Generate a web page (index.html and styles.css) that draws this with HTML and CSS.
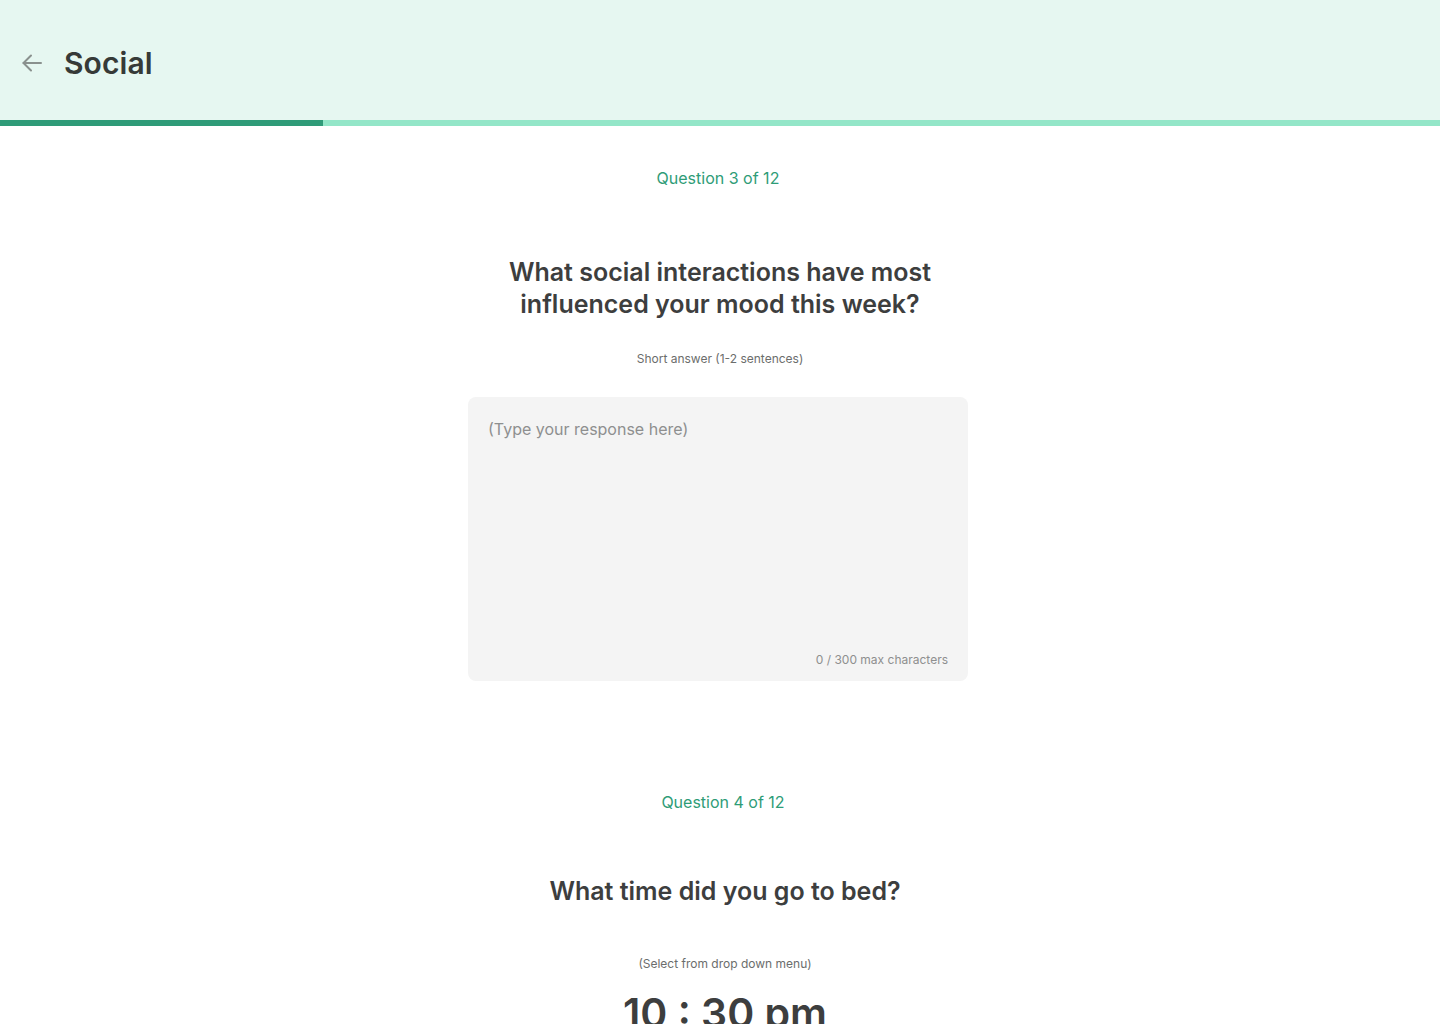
FILE: index.html
```html
<!DOCTYPE html>
<html lang="en">
<head>
<meta charset="utf-8">
<title>Social</title>
<link rel="stylesheet" href="styles.css">
</head>
<body>
<header class="top">
  <div class="top-row">
    <button class="back" aria-label="Back">
      <svg width="24" height="24" viewBox="0 0 24 24" fill="none" stroke="#8a918e" stroke-width="2" stroke-linecap="round" stroke-linejoin="round"><path d="M21 12H3.5"/><path d="M11 4.5 3.5 12l7.5 7.5"/></svg>
    </button>
    <h1 class="title">Social</h1>
  </div>
</header>
<div class="progress"><div class="progress-fill" style="width:323px"></div></div>

<main class="content">
  <section class="question q3">
    <p class="q-count">Question 3 of 12</p>
    <h2 class="q-text">What social interactions have most<br>influenced your mood this week?</h2>
    <p class="q-hint">Short answer (1-2 sentences)</p>
    <div class="answer">
      <div class="placeholder">(Type your response here)</div>
      <div class="counter">0 / 300 max characters</div>
    </div>
  </section>

  <section class="question q4">
    <p class="q-count">Question 4 of 12</p>
    <h2 class="q-text">What time did you go to bed?</h2>
    <p class="q-hint hint-select">(Select from drop down menu)</p>
    <div class="time">10 : 30 pm</div>
  </section>
</main>
</body>
</html>
```

FILE: styles.css
```css
* { box-sizing: border-box; }
html, body { margin: 0; padding: 0; }
body {
  font-family: Inter, "Noto Sans", "Liberation Sans", sans-serif;
  background: #ffffff;
  color: #3b3d3c;
  overflow: hidden;
}
.top {
  height: 120px;
  background: #e6f7f1;
  display: flex;
  align-items: center;
  padding-left: 19px;
}
.top-row {
  display: flex;
  align-items: center;
  gap: 20px;
  margin-top: 6px;
}
.back {
  border: 0;
  background: transparent;
  padding: 0;
  width: 25px;
  height: 24px;
  display: flex;
  align-items: center;
  justify-content: center;
  cursor: pointer;
}
.title {
  margin: 0;
  font-size: 30px;
  font-weight: 600;
  line-height: 36px;
  color: #363a38;
  letter-spacing: 0.1px;
}
.progress {
  height: 6px;
  background: #93e6c8;
}
.progress-fill {
  height: 100%;
  background: #2f9b78;
}
.content {
  display: flex;
  flex-direction: column;
  align-items: center;
}
.question {
  display: flex;
  flex-direction: column;
  align-items: center;
  text-align: center;
  width: 100%;
}
.q-count {
  margin: 0;
  font-size: 16px;
  line-height: 20px;
  color: #2e9c77;
}
.q3 .q-count { margin-top: 42px; transform: translateX(-2px); }
.q-text {
  margin: 68px 0 0;
  font-size: 25px;
  font-weight: 600;
  line-height: 32px;
  color: #3d3e3e;
}
.q-hint {
  margin: 31px 0 0;
  font-size: 12px;
  line-height: 16px;
  color: #6b6d6c;
}
.answer {
  margin-top: 30px;
  margin-right: 4px;
  width: 500px;
  height: 284px;
  background: #f4f4f4;
  border-radius: 8px;
  padding: 20px 20px 13px;
  display: flex;
  flex-direction: column;
  justify-content: space-between;
  text-align: left;
}
.placeholder {
  font-size: 16px;
  line-height: 24px;
  color: #8e8f8f;
}
.counter {
  align-self: flex-end;
  font-size: 12px;
  line-height: 16px;
  color: #8e8f8f;
}
.q4 { padding-left: 10px; }
.q4 .q-count { margin-top: 111px; transform: translateX(-2px); }
.q4 .q-text { margin-top: 63px; }
.q4 .hint-select { margin-top: 49px; }
.time {
  margin-top: 13px;
  font-size: 41px;
  font-weight: 600;
  line-height: 56px;
  color: #3d3e3e;
}
```
